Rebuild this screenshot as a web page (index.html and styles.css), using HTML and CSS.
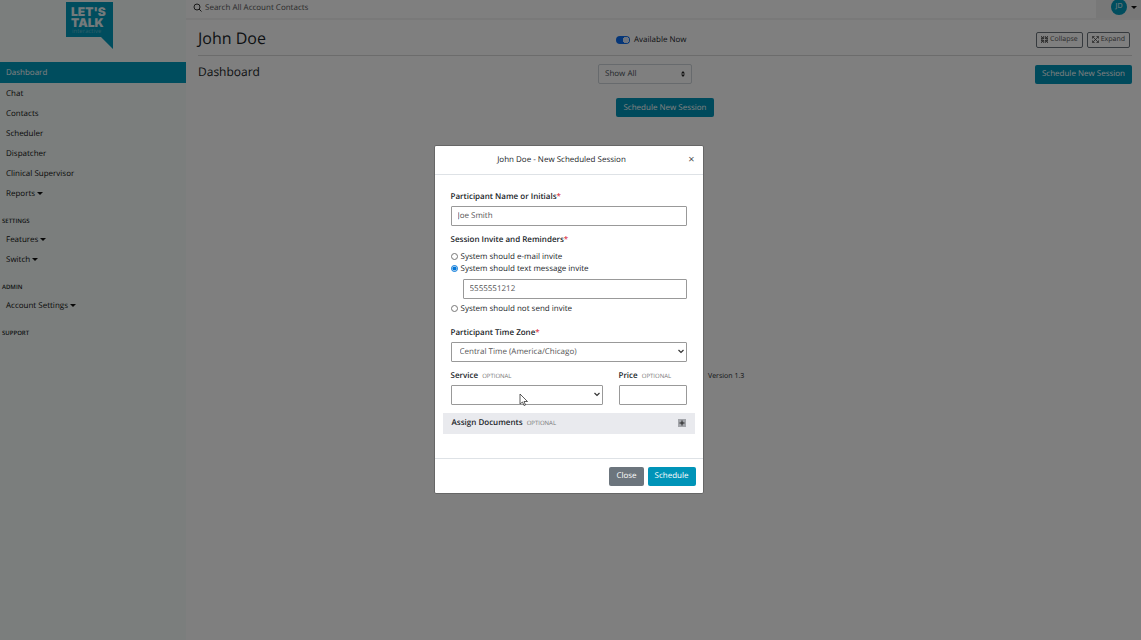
FILE: index.html
```html
<!DOCTYPE html>
<html lang="en">
<head>
    <meta charset="UTF-8">
    <meta name="viewport" content="width=device-width, initial-scale=1.0">
    <title>Dashboard - John Doe</title>
    <link rel="stylesheet" href="styles.css">
</head>
<body>
    <div class="app">
        <aside class="sidebar">
            <a class="logo" href="#">
                <svg width="48" height="49" viewBox="0 0 48 49" role="img" aria-label="Let's Talk Interactive">
                    <path d="M0 2H47V49L35 37H0Z" fill="#009abc"/>
                    <text class="logo-name" x="5" y="16">LET'S</text>
                    <text class="logo-name" x="5" y="27">TALK</text>
                    <text class="logo-sub" x="6" y="33">interactive</text>
                </svg>
            </a>
            <nav class="nav">
                <a class="nav-link active" href="#">Dashboard</a>
                <a class="nav-link" href="#">Chat</a>
                <a class="nav-link" href="#">Contacts</a>
                <a class="nav-link" href="#">Scheduler</a>
                <a class="nav-link" href="#">Dispatcher</a>
                <a class="nav-link" href="#">Clinical Supervisor</a>
                <a class="nav-link caret" href="#">Reports</a>
                <h2 class="nav-heading">Settings</h2>
                <a class="nav-link caret" href="#">Features</a>
                <a class="nav-link caret" href="#">Switch</a>
                <h2 class="nav-heading">Admin</h2>
                <a class="nav-link caret" href="#">Account Settings</a>
                <h2 class="nav-heading">Support</h2>
            </nav>
        </aside>

        <div class="main">
            <header class="topbar">
                <label class="search">
                    <svg width="9" height="9" viewBox="0 0 9 9" fill="none" stroke="#333" aria-hidden="true">
                        <circle cx="4" cy="4" r="3"/>
                        <path d="M6 6L8.500 8.500"/>
                    </svg>
                    <input type="search" placeholder="Search All Account Contacts" aria-label="Search All Account Contacts">
                </label>
                <button class="user caret" type="button"><span class="avatar">JD</span></button>
            </header>

            <main class="content">
                <div class="title-row">
                    <h1>John Doe</h1>
                    <div class="row-tools">
                        <label class="switch"><input type="checkbox" role="switch" checked> Available Now</label>
                        <div class="view-buttons">
                            <button class="btn-outline" type="button">
                                <svg width="7" height="7" viewBox="0 0 8 8" fill="none" stroke="#333" stroke-width=".8" aria-hidden="true">
                                    <path d="M0 0L3 3M8 0L5 3M0 8L3 5M8 8L5 5M3 0V3H0M5 0V3H8M3 8V5H0M5 8V5H8M1 1V7M7 1V7"/>
                                </svg>Collapse
                            </button>
                            <button class="btn-outline" type="button">
                                <svg width="7" height="7" viewBox="0 0 8 8" fill="none" stroke="#333" stroke-width=".8" aria-hidden="true">
                                    <path d="M1 1L7 7M7 1L1 7M.5 3V.5H3M5 .5H7.500V3M.5 5V7.500H3M5 7.500H7.500V5"/>
                                </svg>Expand
                            </button>
                        </div>
                    </div>
                </div>
                <div class="dashboard-row">
                    <h2>Dashboard</h2>
                    <div class="row-tools">
                        <select class="filter" aria-label="Filter sessions">
                            <option>Show All</option>
                        </select>
                        <button class="btn btn-primary" type="button">Schedule New Session</button>
                    </div>
                </div>
                <div class="empty">
                    <button class="btn btn-primary" type="button">Schedule New Session</button>
                </div>
                <footer class="version">Version 1.3</footer>
            </main>
        </div>
    </div>

    <div class="backdrop">
        <form class="modal" role="dialog" aria-modal="true" aria-labelledby="modal-title">
            <header class="modal-header">
                <h2 id="modal-title">John Doe - New Scheduled Session</h2>
                <button class="modal-close" type="button" aria-label="Close">&times;</button>
            </header>
            <div class="modal-body">
                <div class="field">
                    <label class="label" for="name">Participant Name or Initials<span class="required">*</span></label>
                    <input class="control" id="name" type="text" value="Joe Smith">
                </div>
                <fieldset class="field invites">
                    <legend class="label">Session Invite and Reminders<span class="required">*</span></legend>
                    <label class="radio"><input type="radio" name="invite"> System should e-mail invite</label>
                    <label class="radio"><input type="radio" name="invite" checked> System should text message invite</label>
                    <input class="control phone" type="tel" value="5555551212" aria-label="Phone number">
                    <label class="radio"><input type="radio" name="invite"> System should not send invite</label>
                </fieldset>
                <div class="field">
                    <label class="label" for="zone">Participant Time Zone<span class="required">*</span></label>
                    <select class="control" id="zone">
                        <option>Central Time (America/Chicago)</option>
                    </select>
                </div>
                <div class="field-row">
                    <div class="field">
                        <label class="label" for="service">Service <span class="optional">Optional</span></label>
                        <div class="pointer-area">
                            <select class="control" id="service">
                                <option></option>
                            </select>
                            <svg class="pointer" width="9" height="13" viewBox="0 0 9 13" aria-hidden="true">
                                <path d="M1 1V11L3.500 9L5 12.500L6.500 12L5 8.500H8.500Z" fill="#fff" stroke="#333" stroke-width=".8"/>
                            </svg>
                        </div>
                    </div>
                    <div class="field">
                        <label class="label" for="price">Price <span class="optional">Optional</span></label>
                        <input class="control" id="price" type="text">
                    </div>
                </div>
                <button class="documents" type="button">
                    <span class="documents-title">Assign Documents <span class="optional">Optional</span></span>
                    <svg width="8" height="8" viewBox="0 0 8 8" aria-hidden="true">
                        <rect width="8" height="8" fill="#a3a5aa"/>
                        <path d="M4 1.500V6.500M1.500 4H6.500" stroke="#222"/>
                    </svg>
                </button>
            </div>
            <footer class="modal-footer">
                <button class="btn btn-secondary" type="button">Close</button>
                <button class="btn btn-primary" type="submit">Schedule</button>
            </footer>
        </form>
    </div>
</body>
</html>
```

FILE: styles.css
```css
* {
    margin: 0;
    padding: 0;
    box-sizing: border-box;
}

body {
    font-family: "Open Sans", "Noto Sans", sans-serif;
    font-size: 8px;
    line-height: 12px;
    color: #212529;
    background: #fff;
    text-rendering: geometricPrecision;
}

button, input, select {
    font: inherit;
    color: inherit;
    text-rendering: inherit;
}

h1, h2 {
    font-weight: 400;
}

a {
    color: inherit;
    text-decoration: none;
}

.app {
    display: flex;
    min-height: 100vh;
}

/* Sidebar */
.sidebar {
    flex: 0 0 186px;
    background: #f6fdfa;
}

.logo {
    display: block;
    height: 62px;
    padding-left: 66px;
}

.logo-name {
    font-family: Inter, sans-serif;
    font-size: 12px;
    font-weight: 900;
    fill: #e8f4f6;
}

.logo-sub {
    font-size: 6px;
    fill: #5fbdd2;
}

.nav-link {
    display: block;
    height: 20px;
    padding: 1px 6px 0;
    line-height: 20px;
    color: #111;
}

.nav-link.active {
    height: 21px;
    background: #009abc;
    color: #fff;
}

.caret::after {
    content: "";
    display: inline-block;
    margin-left: 2px;
    vertical-align: 1px;
    border: 3px solid transparent;
    border-top-color: #111;
    border-bottom: 0;
}

.nav-heading {
    padding: 14px 2px 4px;
    font-size: 6px;
    font-weight: 600;
    line-height: 8px;
    text-transform: uppercase;
}

/* Main area */
.main {
    flex: 1;
}

.topbar {
    display: flex;
    height: 20px;
    border-bottom: 2px solid #f2f2f2;
    background: #f1f1f1;
}

.search {
    flex: 1;
    display: flex;
    align-items: center;
    gap: 3px;
    padding: 0 7px 3px;
    background: #fff;
}

.search input {
    flex: 1;
    border: 0;
    background: none;
}

.search input::placeholder {
    color: #555;
}

.user {
    display: flex;
    align-items: center;
    gap: 2px;
    width: 45px;
    padding: 0 0 4px 15px;
    border: 0;
    background: none;
}

.avatar {
    width: 16px;
    border-radius: 50%;
    background: #009abc;
    color: #fff;
    font-size: 7px;
    line-height: 16px;
}

.content {
    padding: 0 9px 0 12px;
}

.title-row, .dashboard-row {
    display: grid;
}

.title-row {
    grid-template-columns: 418fr 516fr;
    align-items: center;
    height: 36px;
    padding-top: 4px;
    border-bottom: 1px solid #d8d8d8;
}

.dashboard-row {
    grid-template-columns: 400fr 534fr;
    padding: 8px 0;
}

.row-tools {
    display: flex;
    align-items: center;
    justify-content: space-between;
}

h1 {
    padding-bottom: 4px;
    font-size: 16px;
    line-height: 22px;
}

.dashboard-row h2 {
    font-size: 12px;
    line-height: 16px;
}

.switch {
    display: flex;
    align-items: center;
    gap: 4px;
}

.switch input {
    appearance: none;
    width: 14px;
    height: 8px;
    border-radius: 4px;
    background: radial-gradient(circle at 10px 4px, #dde9fb 3px, #0a6cf0 3px);
}

.view-buttons {
    display: flex;
    gap: 4px;
    padding-right: 2px;
}

.btn-outline {
    display: flex;
    align-items: center;
    gap: 2px;
    height: 16px;
    padding: 0 4px;
    border: 1px solid #6c757d;
    border-radius: 2px;
    background: none;
    color: #555;
    font-size: 7px;
}

.filter {
    appearance: none;
    width: 94px;
    height: 20px;
    padding: 0 6px;
    border: 1px solid #ced4da;
    border-radius: 2px;
    background: url("data:image/svg+xml,%3Csvg xmlns='http://www.w3.org/2000/svg' width='4' height='6'%3E%3Cpath d='M2 0L4 2.500H0ZM2 6L0 3.500H4Z' fill='%23222'/%3E%3C/svg%3E") right 6px center no-repeat;
    color: #495057;
}

.btn {
    height: 19px;
    padding: 0 7px;
    border: 0;
    border-radius: 2px;
    color: #fff;
}

.btn-primary {
    background: #0094b8;
}

.btn-secondary {
    background: #6c757d;
}

.empty {
    padding-top: 6px;
    text-align: center;
}

.version {
    margin-top: 254px;
    padding-left: 510px;
    font-size: 7px;
}

/* Modal */
.backdrop {
    position: fixed;
    inset: 0;
    display: flex;
    align-items: center;
    justify-content: center;
    padding: 0 4px 2px 0;
    background: rgba(0, 0, 0, 0.5);
}

.modal {
    width: 270px;
    border: 1px solid #666;
    border-radius: 2px;
    background: #fff;
}

.modal-header {
    display: grid;
    grid-template-columns: 1fr auto 1fr;
    align-items: center;
    height: 29px;
    padding: 0 8px;
    border-bottom: 1px solid #dee2e6;
}

.modal-header h2 {
    grid-column: 2;
    padding-right: 14px;
    font-size: 8px;
}

.modal-close {
    justify-self: end;
    border: 0;
    background: none;
    color: #555;
    font-size: 11px;
}

.modal-body {
    padding: 16px 16px 24px;
}

.field {
    margin-bottom: 8px;
    border: 0;
}

.label {
    display: block;
    margin-bottom: 3px;
    font-weight: 600;
}

.required {
    color: #dc3545;
}

.optional {
    margin-left: 2px;
    color: #777;
    font-size: 6px;
    font-weight: 400;
    text-transform: uppercase;
}

.control {
    display: block;
    width: 100%;
    height: 20px;
    padding: 0 6px;
    border: 1px solid #999;
    border-radius: 1px;
    background: #fff;
    color: #555;
}

select.control {
    appearance: none;
    padding: 0 8px;
    background: #fff url("data:image/svg+xml,%3Csvg xmlns='http://www.w3.org/2000/svg' width='6' height='5' fill='none' stroke='%23333' stroke-width='1.2'%3E%3Cpath d='M.5 1L3 3.500L5.500 1'/%3E%3C/svg%3E") right 2px center no-repeat;
}

.radio {
    display: flex;
    align-items: center;
    gap: 3px;
}

.radio input {
    width: 7px;
    height: 7px;
    accent-color: #0075d8;
}

.invites {
    margin-bottom: 12px;
}

.invites .label {
    margin-bottom: 5px;
}

.control.phone {
    width: calc(100% - 12px);
    margin: 4px 0 4px 12px;
}

.field-row {
    display: grid;
    grid-template-columns: 152fr 68fr;
    gap: 16px;
}

.pointer-area {
    position: relative;
}

.pointer {
    position: absolute;
    left: 45%;
    top: 8px;
}

.documents {
    display: flex;
    align-items: center;
    justify-content: space-between;
    width: calc(100% + 16px);
    height: 21px;
    margin: 0 -8px;
    padding: 0 9px;
    border: 0;
    background: #e9eaee;
}

.documents-title {
    font-weight: 600;
}

.modal-footer {
    display: flex;
    justify-content: flex-end;
    gap: 4px;
    padding: 8px 7px 7px;
    border-top: 1px solid #dee2e6;
}
```
